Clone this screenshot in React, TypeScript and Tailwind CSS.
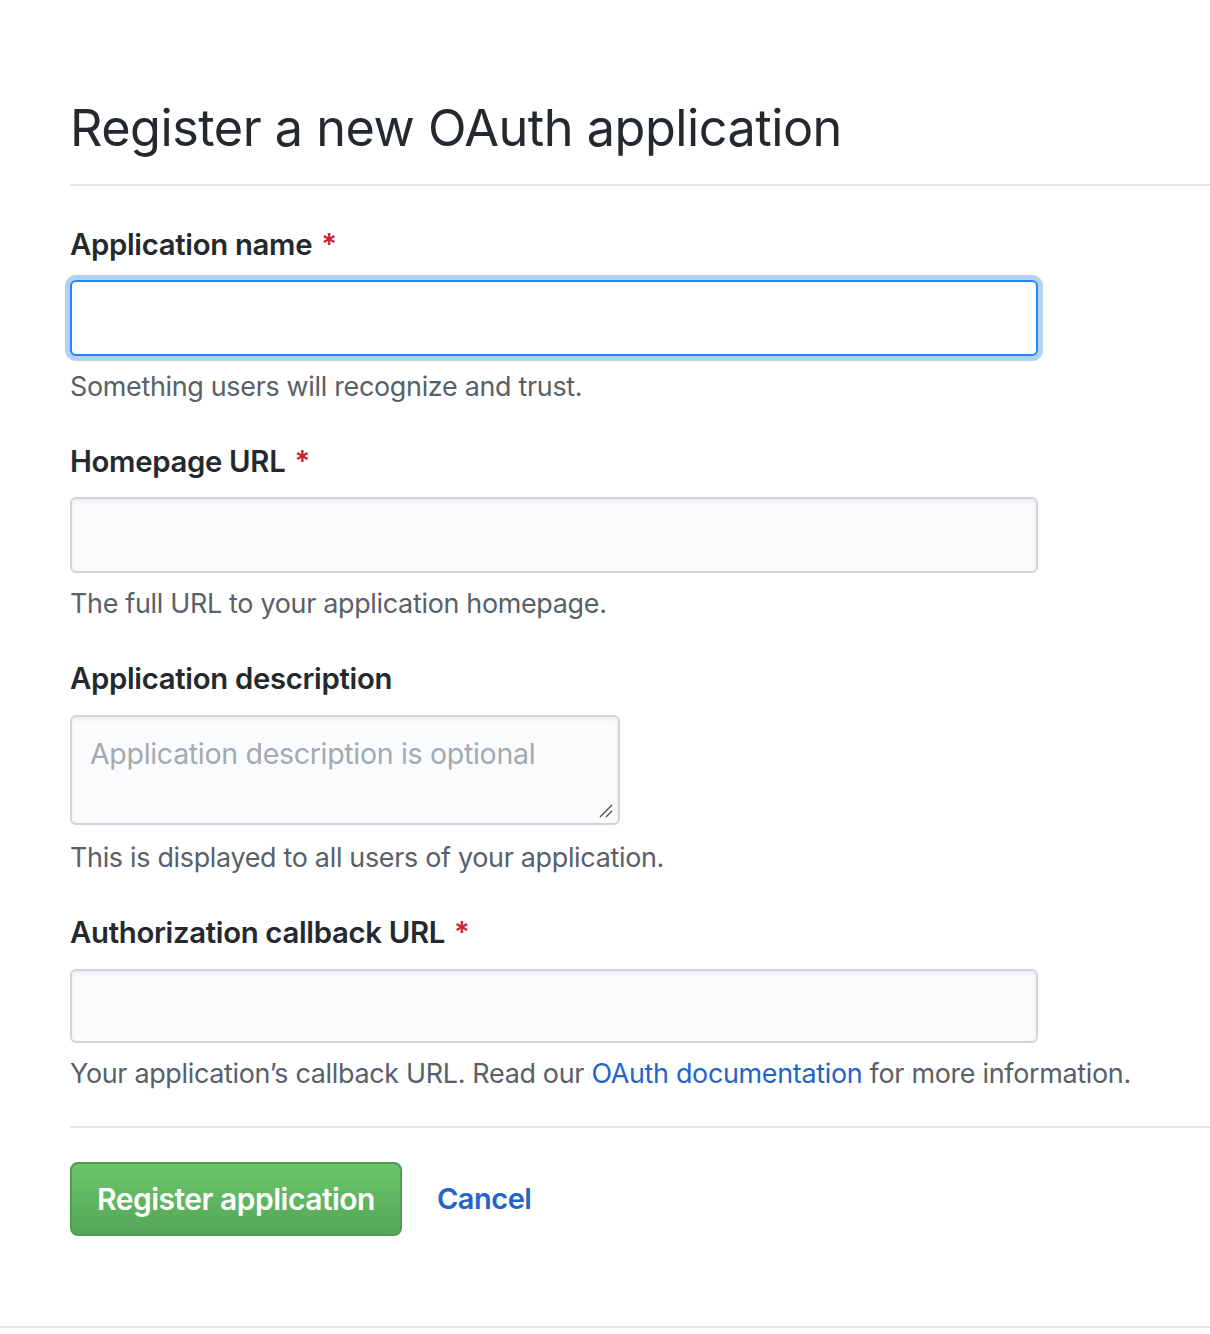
import React from "react";

const font = { fontFamily: "Inter, 'Noto Sans', sans-serif" };

function Label({ text, required }: { text: string; required?: boolean }) {
  return (
    <label className="block text-[29.3px] leading-[40px] font-semibold text-[#24292e] tracking-[-0.3px]">
      {text}
      {required && <span className="text-[#cb2431] ml-[9px]">*</span>}
    </label>
  );
}

function Note({ children, className = "mt-[10px]" }: { children: React.ReactNode; className?: string }) {
  return (
    <p className={`${className} text-[26.9px] leading-[40px] text-[#586069] tracking-[-0.3px]`}>{children}</p>
  );
}

export default function App() {
  return (
    <div className="w-[1210px] h-[1334px] bg-white overflow-hidden" style={font}>
      <div className="border-b-2 border-[#e1e4e8] h-[1328px]">
        <div className="pl-[70px] pt-[96px]">
          <div className="border-b-2 border-[#e1e4e8] pb-[24px]">
            <h1 className="text-[50.4px] leading-[64px] font-normal text-[#24292e] tracking-[-0.5px]">
              Register a new OAuth application
            </h1>
          </div>

          <div className="pt-[39px]">
            <div className="mb-[36px]">
              <Label text="Application name" required />
              <div className="mt-[15px] w-[968px] h-[76px] rounded-[6px] border-2 border-[#2188ff] bg-white shadow-[0_0_0_5px_rgba(3,102,214,0.3)]" />
              <Note>Something users will recognize and trust.</Note>
            </div>

            <div className="mb-[36px]">
              <Label text="Homepage URL" required />
              <div className="mt-[15px] w-[968px] h-[76px] rounded-[6px] border-2 border-[#d1d5da] bg-[#fafbfc] shadow-[inset_0_2px_4px_rgba(27,31,35,0.075)]" />
              <Note>The full URL to your application homepage.</Note>
            </div>

            <div className="mb-[36px]">
              <Label text="Application description" />
              <div className="relative mt-[16px] w-[550px] h-[110px] rounded-[6px] border-2 border-[#d1d5da] bg-[#fafbfc] shadow-[inset_0_2px_4px_rgba(27,31,35,0.075)] px-[18px] pt-[17px]">
                <span className="text-[28.5px] leading-[40px] text-[#a3aab1] tracking-[-0.3px]">
                  Application description is optional
                </span>
                <svg className="absolute right-[3px] bottom-[3px]" width="18" height="18" viewBox="0 0 18 18">
                  <line x1="3" y1="15" x2="15" y2="3" stroke="#555" strokeWidth="1.5" />
                  <line x1="9" y1="15" x2="15" y2="9" stroke="#555" strokeWidth="1.5" />
                </svg>
              </div>
              <Note className="mt-[12px]">This is displayed to all users of your application.</Note>
            </div>

            <div>
              <Label text="Authorization callback URL" required />
              <div className="mt-[16px] w-[968px] h-[74px] rounded-[6px] border-2 border-[#d1d5da] bg-[#fafbfc] shadow-[inset_0_2px_4px_rgba(27,31,35,0.075)]" />
              <Note>
                Your application’s callback URL. Read our{" "}
                <a className="text-[#2463c7]">OAuth documentation</a> for more information.
              </Note>
            </div>
          </div>

          <div className="mt-[33px] border-t-2 border-[#e1e4e8] pt-[34px] flex items-center gap-[35px]">
            <button className="w-[332px] h-[74px] rounded-[8px] border-2 border-[#4f9c51] bg-gradient-to-b from-[#6ac66a] to-[#55a657] text-white text-[30px] font-semibold tracking-[-0.5px]">
              Register application
            </button>
            <a className="text-[29px] font-semibold text-[#2463c7] tracking-[-0.5px]">Cancel</a>
          </div>
        </div>
      </div>
    </div>
  );
}
